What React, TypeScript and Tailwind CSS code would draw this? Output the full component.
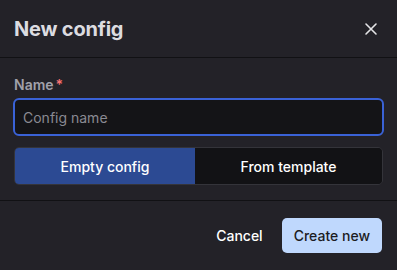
import React, { useState } from 'react'

export default function App() {
  const [mode, setMode] = useState<'empty' | 'template'>('empty')
  const [name, setName] = useState('')

  return (
    <div
      className="w-[397px] h-[270px] bg-[#232228] text-[#e4e4e7] flex flex-col overflow-hidden"
      style={{ fontFamily: 'Inter, "Liberation Sans", sans-serif' }}
    >
      {/* Header */}
      <div className="h-[58px] flex items-center justify-between pl-[14px] pr-[14px] border-b border-[#111114]">
        <h2 className="text-[20px] font-bold text-[#dcdce0] tracking-[-0.2px]">New config</h2>
        <button className="w-6 h-6 flex items-center justify-center text-[#e4e4e7]">
          <svg width="14" height="14" viewBox="0 0 14 14" fill="none" stroke="currentColor" strokeWidth="1.6" strokeLinecap="round">
            <path d="M2 2l10 10M12 2L2 12" />
          </svg>
        </button>
      </div>

      {/* Body */}
      <div className="flex-1 flex flex-col pt-[17px] px-[13px] border-b border-[#111114]">
        <label className="text-[14px] font-semibold text-[#a1a1aa] leading-[20px] pl-[1px] flex items-center">
          Name<span className="text-[#f87171] ml-[2px]">*</span>
        </label>
        <input
          value={name}
          onChange={(e) => setName(e.target.value)}
          placeholder="Config name"
          className="mt-[3px] h-[38px] w-full rounded-[6px] border-2 border-[#3a62d6] bg-[#141417] px-[8px] text-[14px] text-[#e4e4e7] placeholder:text-[#8a8a92] outline-none"
        />
        <div className="mt-[11px] mx-[1px] h-[38px] flex rounded-[5px] border border-[#34343a] overflow-hidden text-[14px] font-medium">
          <button
            onClick={() => setMode('empty')}
            className={`flex-auto ${mode === 'empty' ? 'bg-[#2c4a93] text-white' : 'bg-[#121215] text-white'}`}
          >
            Empty config
          </button>
          <button
            onClick={() => setMode('template')}
            className={`flex-auto ${mode === 'template' ? 'bg-[#2c4a93] text-white' : 'bg-[#121215] text-white'}`}
          >
            From template
          </button>
        </div>
      </div>

      {/* Footer */}
      <div className="h-[69px] flex items-center justify-end gap-[19px] pr-[15px] pb-[1px]">
        <button className="text-[14px] font-medium text-white">Cancel</button>
        <button className="h-[35px] px-[12px] rounded-[5px] bg-[#bfd8fd] text-[14px] text-[#1c1c22] font-medium">
          Create new
        </button>
      </div>
    </div>
  )
}
